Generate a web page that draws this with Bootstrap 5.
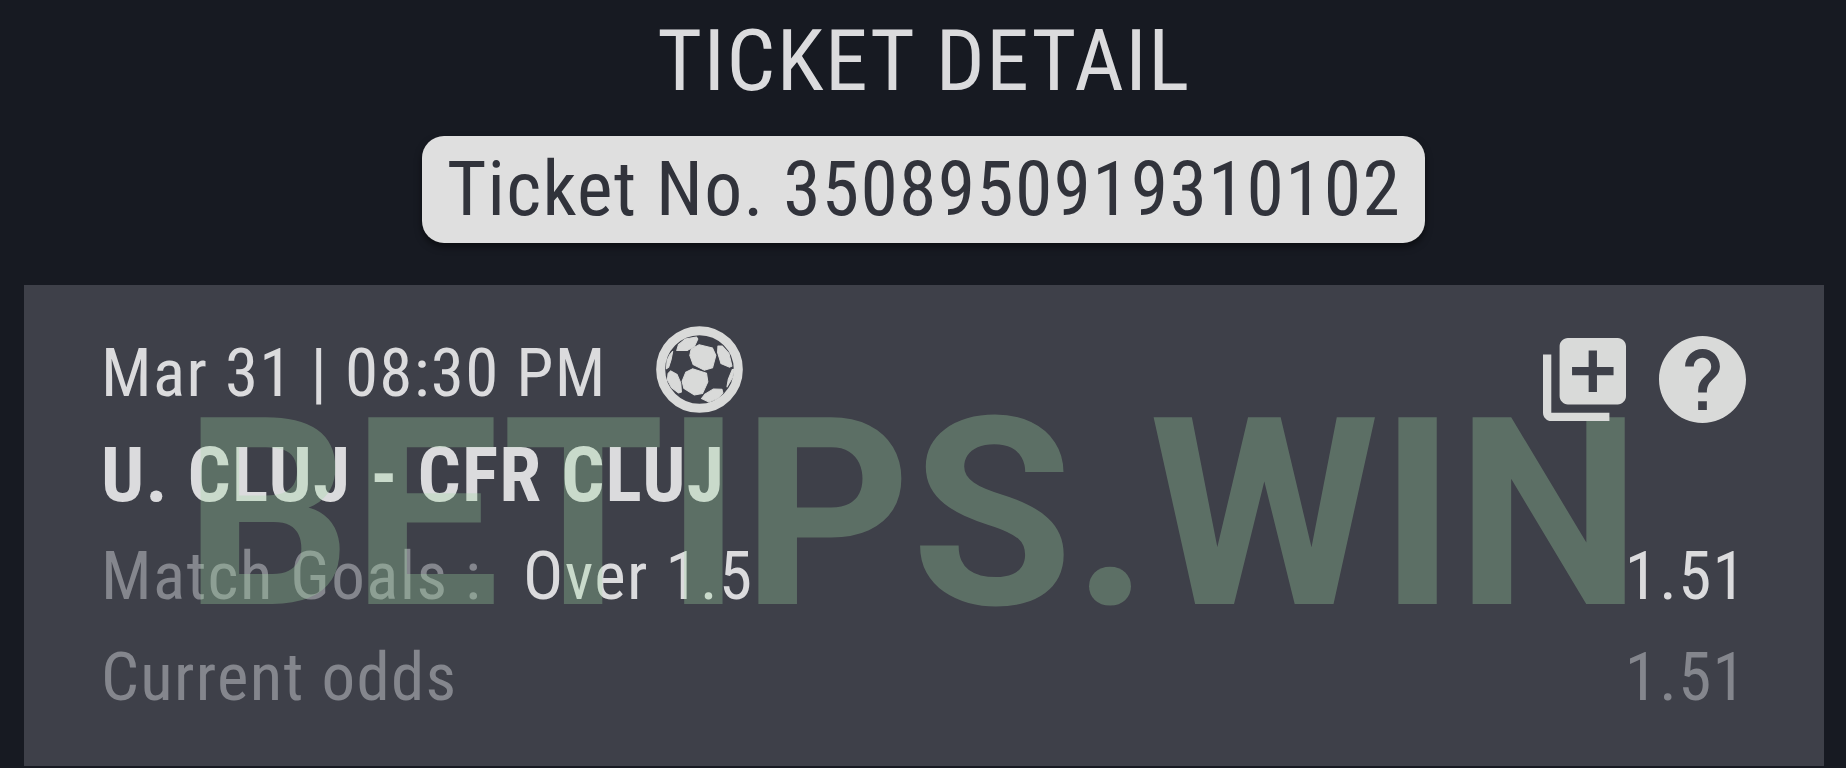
<!DOCTYPE html>
<html lang="en">

<head>
    <meta charset="UTF-8">
    <meta name="viewport" content="width=device-width, initial-scale=1.0">
    <title>Ticket Detail</title>

    <!-- Bootstrap CSS -->
    <link href="https://cdn.jsdelivr.net/npm/bootstrap@5.3.0/dist/css/bootstrap.min.css" rel="stylesheet">

    <style>
        body {
            background: #171a22;
            color: #dbdbdd;
            font-family: "Roboto Condensed", Roboto, sans-serif;
            font-stretch: 75%;
            letter-spacing: 1.35px;
            height: 768px;
            white-space: nowrap;
        }

        .page-title {
            font-size: 86px;
            letter-spacing: 1.45px;
            line-height: 122px;
            height: 121px;
            padding-left: 2px;
        }

        .ticket-no {
            margin-top: 15px;
            margin-left: 1px;
            height: 107px;
            line-height: 107px;
            padding: 0 24px 0 25px;
            border-radius: 22px;
            background: #dfdfdf;
            color: #31333b;
            font-size: 75.7px;
            letter-spacing: 1.25px;
            box-shadow: 0 4px 7px rgba(0, 0, 0, .5);
        }

        .bet-card {
            margin: 42px 22px 0 24px;
            height: 481px;
            padding: 38px 77px 0 77px;
            background: #3e4049;
            font-size: 67px;
        }

        .bet-row {
            height: 101.3px;
        }

        .teams {
            font-size: 75.8px;
            letter-spacing: 1.25px;
            padding-top: 2px;
        }

        .dim {
            color: #84868d;
        }

        .pick {
            margin-left: 41px;
        }

        .icon {
            fill: #d9dad9;
        }

        .icon-ball {
            width: 87px;
            height: 87px;
            margin: 0 0 9px 49px;
        }

        .icon-add {
            width: 83px;
            height: 83px;
        }

        .icon-help {
            width: 87px;
            height: 87px;
        }

        .row-icons {
            gap: 33px;
            margin-top: 11px;
            margin-right: 1px;
            z-index: 2;
        }

        .watermark {
            left: 184px;
            top: 360.5px;
            font-family: Roboto, sans-serif;
            font-stretch: 100%;
            font-size: 262.8px;
            letter-spacing: 0;
            line-height: 307px;
            color: rgba(160, 217, 165, .31);
        }
    </style>
</head>

<body class="overflow-hidden position-relative">

    <div class="d-flex flex-column align-items-center">
        <h1 class="page-title fw-normal m-0">TICKET DETAIL</h1>
        <div class="ticket-no">Ticket No. 3508950919310102</div>
    </div>

    <div class="bet-card">
        <div class="bet-row d-flex align-items-center">
            <span>Mar 31 | 08:30 PM</span>
            <svg class="icon icon-ball" viewBox="20 19 260 260">
                <circle cx="150" cy="149" r="116" fill="none" stroke="#d9dad9" stroke-width="27" />
                <g stroke="#d9dad9" stroke-width="3" stroke-linejoin="round">
                    <path d="M82 92L87 75L107 58L141 52L145 58L135 80L114 92Z" />
                    <path d="M125 88L149 75L189 85L199 107L189 144L164 151L131 134L121 107Z" />
                    <path d="M205 79L218 79L238 101L247 139L239 142L214 131L204 98Z" />
                    <path d="M109 157L129 147L171 160L175 186L159 221L134 225L103 205L98 184Z" />
                    <path d="M56 161L64 153L83 164L94 189L96 216L87 219L66 203L54 180Z" />
                    <path d="M156 236L166 223L192 207L217 208L220 219L205 236L178 246Z" />
                    <path d="M61 105L70 95L65 120L58 142L51 147L53 122Z" />
                    <path d="M248 149L253 148L249 172L232 201L236 178Z" />
                </g>
            </svg>
            <div class="row-icons d-flex align-items-center ms-auto position-relative">
                <svg class="icon icon-add" viewBox="2 2 20 20">
                    <path d="M4 6H2v14c0 1.1.9 2 2 2h14v-2H4V6zm16-4H8c-1.1 0-2 .9-2 2v12c0 1.1.9 2 2 2h12c1.1 0 2-.9 2-2V4c0-1.1-.9-2-2-2zm-1 9h-4v4h-2v-4H9V9h4V5h2v4h4v2z" />
                </svg>
                <svg class="icon icon-help" viewBox="2 2 20 20">
                    <path d="M12 2C6.48 2 2 6.48 2 12s4.48 10 10 10 10-4.48 10-10S17.52 2 12 2zm1 17h-2v-2h2v2zm2.07-7.75l-.9.92C13.45 12.9 13 13.5 13 15h-2v-.5c0-1.1.45-2.1 1.17-2.83l1.24-1.26c.37-.36.59-.86.59-1.41 0-1.1-.9-2-2-2s-2 .9-2 2H8c0-2.21 1.79-4 4-4s4 1.79 4 4c0 .88-.36 1.68-.93 2.25z" />
                </svg>
            </div>
        </div>
        <div class="bet-row d-flex align-items-center teams fw-bold">U. CLUJ - CFR CLUJ</div>
        <div class="bet-row d-flex align-items-center">
            <span class="dim">Match Goals :</span>
            <span class="pick">Over 1.5</span>
            <span class="ms-auto">1.51</span>
        </div>
        <div class="bet-row d-flex align-items-center dim">
            <span>Current odds</span>
            <span class="ms-auto">1.51</span>
        </div>
    </div>

    <div class="watermark position-absolute fw-bold">BETIPS.WIN</div>

    <!-- Bootstrap JS -->
    <script src="https://cdn.jsdelivr.net/npm/bootstrap@5.3.0/dist/js/bootstrap.bundle.min.js"></script>
</body>

</html>
